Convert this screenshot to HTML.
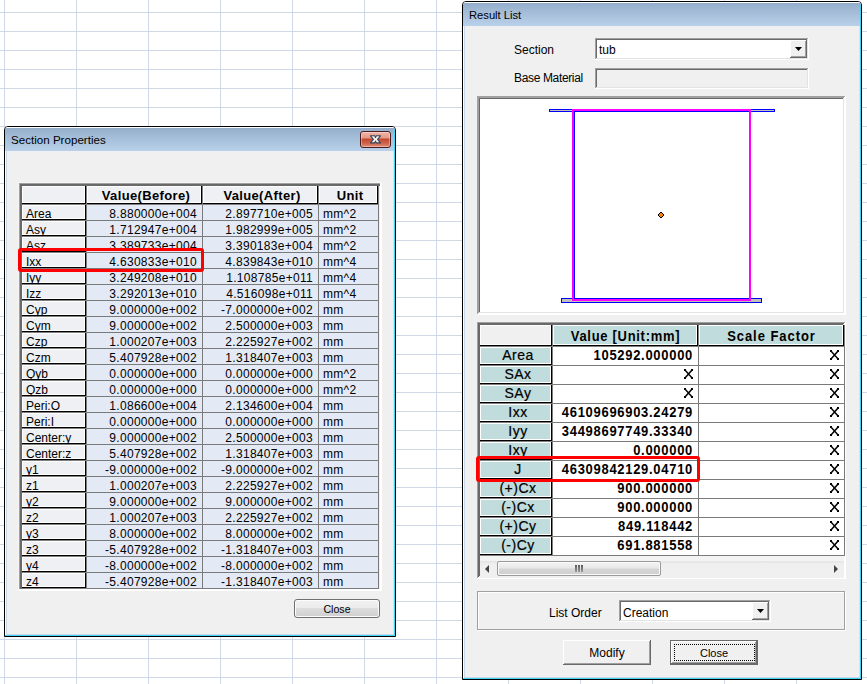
<!DOCTYPE html>
<html><head><meta charset="utf-8"><style>
html,body{margin:0;padding:0;}
body{width:867px;height:684px;overflow:hidden;position:relative;background:#fff;
font-family:"Liberation Sans",sans-serif;color:#000;}
.t{position:absolute;white-space:pre;line-height:14px;}
.abs{position:absolute;}
</style></head><body>
<div class="abs" style="left:0;top:0;width:867px;height:684px;background-image:linear-gradient(to right, transparent 4px, #d0d7e5 4px, #d0d7e5 5px, transparent 5px),linear-gradient(to bottom, transparent 12px, #d0d7e5 12px, #d0d7e5 13px, transparent 13px);background-size:72px 684px, 867px 19px;background-position:0 0, 0 0;background-repeat:repeat-x, repeat-y;"></div>
<div class="abs" style="left:4px;top:126px;width:390px;height:509px;border:1px solid #000;border-radius:4px 4px 0 0;background:#f0f0f0;box-sizing:content-box;"></div>
<div class="abs" style="left:5px;top:127px;width:390px;height:24px;border-radius:3px 3px 0 0;background:linear-gradient(to bottom,#ffffff 0px,#ffffff 1px,#93aecb 1px,#9db6d2 6px,#b9d1ea 24px);"></div>
<div style="position:absolute;left:5px;top:151px;width:1px;height:485px;background:#ffffff;"></div>
<div style="position:absolute;left:6px;top:151px;width:1px;height:483px;background:#c9d9ea;"></div>
<div style="position:absolute;left:393px;top:151px;width:1px;height:484px;background:#d6e3f0;"></div>
<div style="position:absolute;left:394px;top:130px;width:1px;height:506px;background:#3fd3f5;"></div>
<div style="position:absolute;left:6px;top:634px;width:388px;height:1px;background:#c9d9ea;"></div>
<div style="position:absolute;left:5px;top:635px;width:390px;height:1px;background:#3fd3f5;"></div>
<div class="t" style="left:11px;top:133px;text-align:left;font-size:11.6px;color:#000;">Section Properties</div>
<div class="abs" style="left:360px;top:131px;width:29px;height:15px;border:1px solid #4b1c20;border-radius:3px;
background:linear-gradient(to bottom,#f1b5a6 0px,#e49a88 6px,#c4472c 7px,#cf6a52 12px,#e0907a 15px);box-shadow:inset 0 0 0 1px rgba(255,255,255,0.35);"></div>
<svg class="abs" style="left:369px;top:134px" width="13" height="11" viewBox="0 0 13 11">
<path d="M1.5 1.8 L5.7 1.8 L6.5 3.6 L7.3 1.8 L11.5 1.8 L8.6 5.35 L11.5 8.9 L7.3 8.9 L6.5 7.1 L5.7 8.9 L1.5 8.9 L4.4 5.35 Z" fill="#f4f4f4" stroke="#3a4258" stroke-width="1.1" stroke-linejoin="round"/>
</svg>
<div style="position:absolute;left:18px;top:182px;width:364px;height:1px;background:#f5f5f5;"></div>
<div style="position:absolute;left:18px;top:182px;width:1px;height:409px;background:#f5f5f5;"></div>
<div style="position:absolute;left:19px;top:183px;width:362px;height:1px;background:#a0a0a0;"></div>
<div style="position:absolute;left:19px;top:183px;width:1px;height:407px;background:#a0a0a0;"></div>
<div style="position:absolute;left:20px;top:184px;width:360px;height:2px;background:#696969;"></div>
<div style="position:absolute;left:20px;top:184px;width:2px;height:405px;background:#696969;"></div>
<div style="position:absolute;left:380px;top:183px;width:2px;height:408px;background:#ffffff;"></div>
<div style="position:absolute;left:19px;top:589px;width:363px;height:2px;background:#ffffff;"></div>
<div style="position:absolute;left:22px;top:186px;width:358px;height:403px;background:#f0f0f0;"></div>
<div style="position:absolute;left:22px;top:186px;width:65px;height:19px;background:#808080;"></div>
<div style="position:absolute;left:22px;top:186px;width:64px;height:18px;background:#000;"></div>
<div style="position:absolute;left:22px;top:186px;width:63px;height:17px;background:#fff;"></div>
<div style="position:absolute;left:23px;top:187px;width:61px;height:15px;background:#eff0f4;"></div>
<div style="position:absolute;left:87px;top:186px;width:116px;height:19px;background:#808080;"></div>
<div style="position:absolute;left:87px;top:186px;width:115px;height:18px;background:#000;"></div>
<div style="position:absolute;left:87px;top:186px;width:114px;height:17px;background:#fff;"></div>
<div style="position:absolute;left:88px;top:187px;width:112px;height:15px;background:#eff0f4;"></div>
<div style="position:absolute;left:203px;top:186px;width:116px;height:19px;background:#808080;"></div>
<div style="position:absolute;left:203px;top:186px;width:115px;height:18px;background:#000;"></div>
<div style="position:absolute;left:203px;top:186px;width:114px;height:17px;background:#fff;"></div>
<div style="position:absolute;left:204px;top:187px;width:112px;height:15px;background:#eff0f4;"></div>
<div style="position:absolute;left:319px;top:186px;width:60px;height:19px;background:#808080;"></div>
<div style="position:absolute;left:319px;top:186px;width:59px;height:18px;background:#000;"></div>
<div style="position:absolute;left:319px;top:186px;width:58px;height:17px;background:#fff;"></div>
<div style="position:absolute;left:320px;top:187px;width:56px;height:15px;background:#eff0f4;"></div>
<div class="t" style="left:88px;top:189px;width:116px;text-align:center;font-size:13px;font-weight:bold;letter-spacing:0.35px;">Value(Before)</div>
<div class="t" style="left:204px;top:189px;width:116px;text-align:center;font-size:13px;font-weight:bold;letter-spacing:0.35px;">Value(After)</div>
<div class="t" style="left:320px;top:189px;width:60px;text-align:center;font-size:13px;font-weight:bold;letter-spacing:0.35px;">Unit</div>
<div style="position:absolute;left:22px;top:205px;width:65px;height:16px;background:#808080;"></div>
<div style="position:absolute;left:22px;top:205px;width:64px;height:15px;background:#000;"></div>
<div style="position:absolute;left:22px;top:205px;width:63px;height:14px;background:#fff;"></div>
<div style="position:absolute;left:23px;top:206px;width:61px;height:12px;background:#eff0f4;"></div>
<div style="position:absolute;left:87px;top:205px;width:116px;height:16px;background:#7a7a7a;"></div>
<div style="position:absolute;left:87px;top:205px;width:115px;height:15px;background:#e4eaf5;"></div>
<div style="position:absolute;left:203px;top:205px;width:116px;height:16px;background:#7a7a7a;"></div>
<div style="position:absolute;left:203px;top:205px;width:115px;height:15px;background:#e4eaf5;"></div>
<div style="position:absolute;left:319px;top:205px;width:60px;height:16px;background:#7a7a7a;"></div>
<div style="position:absolute;left:319px;top:205px;width:59px;height:15px;background:#e4eaf5;"></div>
<div class="abs" style="left:23px;top:206px;width:61px;height:13px;overflow:hidden;"><div class="t" style="left:3px;top:1px;font-size:12px;">Area</div></div>
<div class="t" style="left:87px;top:207px;width:110px;text-align:right;font-size:12px;letter-spacing:0.3px;">8.880000e+004</div>
<div class="t" style="left:203px;top:207px;width:110px;text-align:right;font-size:12px;letter-spacing:0.3px;">2.897710e+005</div>
<div class="t" style="left:323px;top:207px;text-align:left;font-size:12px;letter-spacing:0.3px;">mm^2</div>
<div style="position:absolute;left:22px;top:221px;width:65px;height:16px;background:#808080;"></div>
<div style="position:absolute;left:22px;top:221px;width:64px;height:15px;background:#000;"></div>
<div style="position:absolute;left:22px;top:221px;width:63px;height:14px;background:#fff;"></div>
<div style="position:absolute;left:23px;top:222px;width:61px;height:12px;background:#eff0f4;"></div>
<div style="position:absolute;left:87px;top:221px;width:116px;height:16px;background:#7a7a7a;"></div>
<div style="position:absolute;left:87px;top:221px;width:115px;height:15px;background:#e4eaf5;"></div>
<div style="position:absolute;left:203px;top:221px;width:116px;height:16px;background:#7a7a7a;"></div>
<div style="position:absolute;left:203px;top:221px;width:115px;height:15px;background:#e4eaf5;"></div>
<div style="position:absolute;left:319px;top:221px;width:60px;height:16px;background:#7a7a7a;"></div>
<div style="position:absolute;left:319px;top:221px;width:59px;height:15px;background:#e4eaf5;"></div>
<div class="abs" style="left:23px;top:222px;width:61px;height:13px;overflow:hidden;"><div class="t" style="left:3px;top:1px;font-size:12px;">Asy</div></div>
<div class="t" style="left:87px;top:223px;width:110px;text-align:right;font-size:12px;letter-spacing:0.3px;">1.712947e+004</div>
<div class="t" style="left:203px;top:223px;width:110px;text-align:right;font-size:12px;letter-spacing:0.3px;">1.982999e+005</div>
<div class="t" style="left:323px;top:223px;text-align:left;font-size:12px;letter-spacing:0.3px;">mm^2</div>
<div style="position:absolute;left:22px;top:237px;width:65px;height:16px;background:#808080;"></div>
<div style="position:absolute;left:22px;top:237px;width:64px;height:15px;background:#000;"></div>
<div style="position:absolute;left:22px;top:237px;width:63px;height:14px;background:#fff;"></div>
<div style="position:absolute;left:23px;top:238px;width:61px;height:12px;background:#eff0f4;"></div>
<div style="position:absolute;left:87px;top:237px;width:116px;height:16px;background:#7a7a7a;"></div>
<div style="position:absolute;left:87px;top:237px;width:115px;height:15px;background:#e4eaf5;"></div>
<div style="position:absolute;left:203px;top:237px;width:116px;height:16px;background:#7a7a7a;"></div>
<div style="position:absolute;left:203px;top:237px;width:115px;height:15px;background:#e4eaf5;"></div>
<div style="position:absolute;left:319px;top:237px;width:60px;height:16px;background:#7a7a7a;"></div>
<div style="position:absolute;left:319px;top:237px;width:59px;height:15px;background:#e4eaf5;"></div>
<div class="abs" style="left:23px;top:238px;width:61px;height:13px;overflow:hidden;"><div class="t" style="left:3px;top:1px;font-size:12px;">Asz</div></div>
<div class="t" style="left:87px;top:239px;width:110px;text-align:right;font-size:12px;letter-spacing:0.3px;">3.389733e+004</div>
<div class="t" style="left:203px;top:239px;width:110px;text-align:right;font-size:12px;letter-spacing:0.3px;">3.390183e+004</div>
<div class="t" style="left:323px;top:239px;text-align:left;font-size:12px;letter-spacing:0.3px;">mm^2</div>
<div style="position:absolute;left:22px;top:253px;width:65px;height:16px;background:#808080;"></div>
<div style="position:absolute;left:22px;top:253px;width:64px;height:15px;background:#000;"></div>
<div style="position:absolute;left:22px;top:253px;width:63px;height:14px;background:#fff;"></div>
<div style="position:absolute;left:23px;top:254px;width:61px;height:12px;background:#eff0f4;"></div>
<div style="position:absolute;left:87px;top:253px;width:116px;height:16px;background:#7a7a7a;"></div>
<div style="position:absolute;left:87px;top:253px;width:115px;height:15px;background:#e4eaf5;"></div>
<div style="position:absolute;left:203px;top:253px;width:116px;height:16px;background:#7a7a7a;"></div>
<div style="position:absolute;left:203px;top:253px;width:115px;height:15px;background:#e4eaf5;"></div>
<div style="position:absolute;left:319px;top:253px;width:60px;height:16px;background:#7a7a7a;"></div>
<div style="position:absolute;left:319px;top:253px;width:59px;height:15px;background:#e4eaf5;"></div>
<div class="abs" style="left:23px;top:254px;width:61px;height:13px;overflow:hidden;"><div class="t" style="left:3px;top:1px;font-size:12px;">Ixx</div></div>
<div class="t" style="left:87px;top:255px;width:110px;text-align:right;font-size:12px;letter-spacing:0.3px;">4.630833e+010</div>
<div class="t" style="left:203px;top:255px;width:110px;text-align:right;font-size:12px;letter-spacing:0.3px;">4.839843e+010</div>
<div class="t" style="left:323px;top:255px;text-align:left;font-size:12px;letter-spacing:0.3px;">mm^4</div>
<div style="position:absolute;left:22px;top:269px;width:65px;height:16px;background:#808080;"></div>
<div style="position:absolute;left:22px;top:269px;width:64px;height:15px;background:#000;"></div>
<div style="position:absolute;left:22px;top:269px;width:63px;height:14px;background:#fff;"></div>
<div style="position:absolute;left:23px;top:270px;width:61px;height:12px;background:#eff0f4;"></div>
<div style="position:absolute;left:87px;top:269px;width:116px;height:16px;background:#7a7a7a;"></div>
<div style="position:absolute;left:87px;top:269px;width:115px;height:15px;background:#e4eaf5;"></div>
<div style="position:absolute;left:203px;top:269px;width:116px;height:16px;background:#7a7a7a;"></div>
<div style="position:absolute;left:203px;top:269px;width:115px;height:15px;background:#e4eaf5;"></div>
<div style="position:absolute;left:319px;top:269px;width:60px;height:16px;background:#7a7a7a;"></div>
<div style="position:absolute;left:319px;top:269px;width:59px;height:15px;background:#e4eaf5;"></div>
<div class="abs" style="left:23px;top:270px;width:61px;height:13px;overflow:hidden;"><div class="t" style="left:3px;top:1px;font-size:12px;">Iyy</div></div>
<div class="t" style="left:87px;top:271px;width:110px;text-align:right;font-size:12px;letter-spacing:0.3px;">3.249208e+010</div>
<div class="t" style="left:203px;top:271px;width:110px;text-align:right;font-size:12px;letter-spacing:0.3px;">1.108785e+011</div>
<div class="t" style="left:323px;top:271px;text-align:left;font-size:12px;letter-spacing:0.3px;">mm^4</div>
<div style="position:absolute;left:22px;top:285px;width:65px;height:16px;background:#808080;"></div>
<div style="position:absolute;left:22px;top:285px;width:64px;height:15px;background:#000;"></div>
<div style="position:absolute;left:22px;top:285px;width:63px;height:14px;background:#fff;"></div>
<div style="position:absolute;left:23px;top:286px;width:61px;height:12px;background:#eff0f4;"></div>
<div style="position:absolute;left:87px;top:285px;width:116px;height:16px;background:#7a7a7a;"></div>
<div style="position:absolute;left:87px;top:285px;width:115px;height:15px;background:#e4eaf5;"></div>
<div style="position:absolute;left:203px;top:285px;width:116px;height:16px;background:#7a7a7a;"></div>
<div style="position:absolute;left:203px;top:285px;width:115px;height:15px;background:#e4eaf5;"></div>
<div style="position:absolute;left:319px;top:285px;width:60px;height:16px;background:#7a7a7a;"></div>
<div style="position:absolute;left:319px;top:285px;width:59px;height:15px;background:#e4eaf5;"></div>
<div class="abs" style="left:23px;top:286px;width:61px;height:13px;overflow:hidden;"><div class="t" style="left:3px;top:1px;font-size:12px;">Izz</div></div>
<div class="t" style="left:87px;top:287px;width:110px;text-align:right;font-size:12px;letter-spacing:0.3px;">3.292013e+010</div>
<div class="t" style="left:203px;top:287px;width:110px;text-align:right;font-size:12px;letter-spacing:0.3px;">4.516098e+011</div>
<div class="t" style="left:323px;top:287px;text-align:left;font-size:12px;letter-spacing:0.3px;">mm^4</div>
<div style="position:absolute;left:22px;top:301px;width:65px;height:16px;background:#808080;"></div>
<div style="position:absolute;left:22px;top:301px;width:64px;height:15px;background:#000;"></div>
<div style="position:absolute;left:22px;top:301px;width:63px;height:14px;background:#fff;"></div>
<div style="position:absolute;left:23px;top:302px;width:61px;height:12px;background:#eff0f4;"></div>
<div style="position:absolute;left:87px;top:301px;width:116px;height:16px;background:#7a7a7a;"></div>
<div style="position:absolute;left:87px;top:301px;width:115px;height:15px;background:#e4eaf5;"></div>
<div style="position:absolute;left:203px;top:301px;width:116px;height:16px;background:#7a7a7a;"></div>
<div style="position:absolute;left:203px;top:301px;width:115px;height:15px;background:#e4eaf5;"></div>
<div style="position:absolute;left:319px;top:301px;width:60px;height:16px;background:#7a7a7a;"></div>
<div style="position:absolute;left:319px;top:301px;width:59px;height:15px;background:#e4eaf5;"></div>
<div class="abs" style="left:23px;top:302px;width:61px;height:13px;overflow:hidden;"><div class="t" style="left:3px;top:1px;font-size:12px;">Cyp</div></div>
<div class="t" style="left:87px;top:303px;width:110px;text-align:right;font-size:12px;letter-spacing:0.3px;">9.000000e+002</div>
<div class="t" style="left:203px;top:303px;width:110px;text-align:right;font-size:12px;letter-spacing:0.3px;">-7.000000e+002</div>
<div class="t" style="left:323px;top:303px;text-align:left;font-size:12px;letter-spacing:0.3px;">mm</div>
<div style="position:absolute;left:22px;top:317px;width:65px;height:16px;background:#808080;"></div>
<div style="position:absolute;left:22px;top:317px;width:64px;height:15px;background:#000;"></div>
<div style="position:absolute;left:22px;top:317px;width:63px;height:14px;background:#fff;"></div>
<div style="position:absolute;left:23px;top:318px;width:61px;height:12px;background:#eff0f4;"></div>
<div style="position:absolute;left:87px;top:317px;width:116px;height:16px;background:#7a7a7a;"></div>
<div style="position:absolute;left:87px;top:317px;width:115px;height:15px;background:#e4eaf5;"></div>
<div style="position:absolute;left:203px;top:317px;width:116px;height:16px;background:#7a7a7a;"></div>
<div style="position:absolute;left:203px;top:317px;width:115px;height:15px;background:#e4eaf5;"></div>
<div style="position:absolute;left:319px;top:317px;width:60px;height:16px;background:#7a7a7a;"></div>
<div style="position:absolute;left:319px;top:317px;width:59px;height:15px;background:#e4eaf5;"></div>
<div class="abs" style="left:23px;top:318px;width:61px;height:13px;overflow:hidden;"><div class="t" style="left:3px;top:1px;font-size:12px;">Cym</div></div>
<div class="t" style="left:87px;top:319px;width:110px;text-align:right;font-size:12px;letter-spacing:0.3px;">9.000000e+002</div>
<div class="t" style="left:203px;top:319px;width:110px;text-align:right;font-size:12px;letter-spacing:0.3px;">2.500000e+003</div>
<div class="t" style="left:323px;top:319px;text-align:left;font-size:12px;letter-spacing:0.3px;">mm</div>
<div style="position:absolute;left:22px;top:333px;width:65px;height:16px;background:#808080;"></div>
<div style="position:absolute;left:22px;top:333px;width:64px;height:15px;background:#000;"></div>
<div style="position:absolute;left:22px;top:333px;width:63px;height:14px;background:#fff;"></div>
<div style="position:absolute;left:23px;top:334px;width:61px;height:12px;background:#eff0f4;"></div>
<div style="position:absolute;left:87px;top:333px;width:116px;height:16px;background:#7a7a7a;"></div>
<div style="position:absolute;left:87px;top:333px;width:115px;height:15px;background:#e4eaf5;"></div>
<div style="position:absolute;left:203px;top:333px;width:116px;height:16px;background:#7a7a7a;"></div>
<div style="position:absolute;left:203px;top:333px;width:115px;height:15px;background:#e4eaf5;"></div>
<div style="position:absolute;left:319px;top:333px;width:60px;height:16px;background:#7a7a7a;"></div>
<div style="position:absolute;left:319px;top:333px;width:59px;height:15px;background:#e4eaf5;"></div>
<div class="abs" style="left:23px;top:334px;width:61px;height:13px;overflow:hidden;"><div class="t" style="left:3px;top:1px;font-size:12px;">Czp</div></div>
<div class="t" style="left:87px;top:335px;width:110px;text-align:right;font-size:12px;letter-spacing:0.3px;">1.000207e+003</div>
<div class="t" style="left:203px;top:335px;width:110px;text-align:right;font-size:12px;letter-spacing:0.3px;">2.225927e+002</div>
<div class="t" style="left:323px;top:335px;text-align:left;font-size:12px;letter-spacing:0.3px;">mm</div>
<div style="position:absolute;left:22px;top:349px;width:65px;height:16px;background:#808080;"></div>
<div style="position:absolute;left:22px;top:349px;width:64px;height:15px;background:#000;"></div>
<div style="position:absolute;left:22px;top:349px;width:63px;height:14px;background:#fff;"></div>
<div style="position:absolute;left:23px;top:350px;width:61px;height:12px;background:#eff0f4;"></div>
<div style="position:absolute;left:87px;top:349px;width:116px;height:16px;background:#7a7a7a;"></div>
<div style="position:absolute;left:87px;top:349px;width:115px;height:15px;background:#e4eaf5;"></div>
<div style="position:absolute;left:203px;top:349px;width:116px;height:16px;background:#7a7a7a;"></div>
<div style="position:absolute;left:203px;top:349px;width:115px;height:15px;background:#e4eaf5;"></div>
<div style="position:absolute;left:319px;top:349px;width:60px;height:16px;background:#7a7a7a;"></div>
<div style="position:absolute;left:319px;top:349px;width:59px;height:15px;background:#e4eaf5;"></div>
<div class="abs" style="left:23px;top:350px;width:61px;height:13px;overflow:hidden;"><div class="t" style="left:3px;top:1px;font-size:12px;">Czm</div></div>
<div class="t" style="left:87px;top:351px;width:110px;text-align:right;font-size:12px;letter-spacing:0.3px;">5.407928e+002</div>
<div class="t" style="left:203px;top:351px;width:110px;text-align:right;font-size:12px;letter-spacing:0.3px;">1.318407e+003</div>
<div class="t" style="left:323px;top:351px;text-align:left;font-size:12px;letter-spacing:0.3px;">mm</div>
<div style="position:absolute;left:22px;top:365px;width:65px;height:16px;background:#808080;"></div>
<div style="position:absolute;left:22px;top:365px;width:64px;height:15px;background:#000;"></div>
<div style="position:absolute;left:22px;top:365px;width:63px;height:14px;background:#fff;"></div>
<div style="position:absolute;left:23px;top:366px;width:61px;height:12px;background:#eff0f4;"></div>
<div style="position:absolute;left:87px;top:365px;width:116px;height:16px;background:#7a7a7a;"></div>
<div style="position:absolute;left:87px;top:365px;width:115px;height:15px;background:#e4eaf5;"></div>
<div style="position:absolute;left:203px;top:365px;width:116px;height:16px;background:#7a7a7a;"></div>
<div style="position:absolute;left:203px;top:365px;width:115px;height:15px;background:#e4eaf5;"></div>
<div style="position:absolute;left:319px;top:365px;width:60px;height:16px;background:#7a7a7a;"></div>
<div style="position:absolute;left:319px;top:365px;width:59px;height:15px;background:#e4eaf5;"></div>
<div class="abs" style="left:23px;top:366px;width:61px;height:13px;overflow:hidden;"><div class="t" style="left:3px;top:1px;font-size:12px;">Qyb</div></div>
<div class="t" style="left:87px;top:367px;width:110px;text-align:right;font-size:12px;letter-spacing:0.3px;">0.000000e+000</div>
<div class="t" style="left:203px;top:367px;width:110px;text-align:right;font-size:12px;letter-spacing:0.3px;">0.000000e+000</div>
<div class="t" style="left:323px;top:367px;text-align:left;font-size:12px;letter-spacing:0.3px;">mm^2</div>
<div style="position:absolute;left:22px;top:381px;width:65px;height:16px;background:#808080;"></div>
<div style="position:absolute;left:22px;top:381px;width:64px;height:15px;background:#000;"></div>
<div style="position:absolute;left:22px;top:381px;width:63px;height:14px;background:#fff;"></div>
<div style="position:absolute;left:23px;top:382px;width:61px;height:12px;background:#eff0f4;"></div>
<div style="position:absolute;left:87px;top:381px;width:116px;height:16px;background:#7a7a7a;"></div>
<div style="position:absolute;left:87px;top:381px;width:115px;height:15px;background:#e4eaf5;"></div>
<div style="position:absolute;left:203px;top:381px;width:116px;height:16px;background:#7a7a7a;"></div>
<div style="position:absolute;left:203px;top:381px;width:115px;height:15px;background:#e4eaf5;"></div>
<div style="position:absolute;left:319px;top:381px;width:60px;height:16px;background:#7a7a7a;"></div>
<div style="position:absolute;left:319px;top:381px;width:59px;height:15px;background:#e4eaf5;"></div>
<div class="abs" style="left:23px;top:382px;width:61px;height:13px;overflow:hidden;"><div class="t" style="left:3px;top:1px;font-size:12px;">Qzb</div></div>
<div class="t" style="left:87px;top:383px;width:110px;text-align:right;font-size:12px;letter-spacing:0.3px;">0.000000e+000</div>
<div class="t" style="left:203px;top:383px;width:110px;text-align:right;font-size:12px;letter-spacing:0.3px;">0.000000e+000</div>
<div class="t" style="left:323px;top:383px;text-align:left;font-size:12px;letter-spacing:0.3px;">mm^2</div>
<div style="position:absolute;left:22px;top:397px;width:65px;height:16px;background:#808080;"></div>
<div style="position:absolute;left:22px;top:397px;width:64px;height:15px;background:#000;"></div>
<div style="position:absolute;left:22px;top:397px;width:63px;height:14px;background:#fff;"></div>
<div style="position:absolute;left:23px;top:398px;width:61px;height:12px;background:#eff0f4;"></div>
<div style="position:absolute;left:87px;top:397px;width:116px;height:16px;background:#7a7a7a;"></div>
<div style="position:absolute;left:87px;top:397px;width:115px;height:15px;background:#e4eaf5;"></div>
<div style="position:absolute;left:203px;top:397px;width:116px;height:16px;background:#7a7a7a;"></div>
<div style="position:absolute;left:203px;top:397px;width:115px;height:15px;background:#e4eaf5;"></div>
<div style="position:absolute;left:319px;top:397px;width:60px;height:16px;background:#7a7a7a;"></div>
<div style="position:absolute;left:319px;top:397px;width:59px;height:15px;background:#e4eaf5;"></div>
<div class="abs" style="left:23px;top:398px;width:61px;height:13px;overflow:hidden;"><div class="t" style="left:3px;top:1px;font-size:12px;">Peri:O</div></div>
<div class="t" style="left:87px;top:399px;width:110px;text-align:right;font-size:12px;letter-spacing:0.3px;">1.086600e+004</div>
<div class="t" style="left:203px;top:399px;width:110px;text-align:right;font-size:12px;letter-spacing:0.3px;">2.134600e+004</div>
<div class="t" style="left:323px;top:399px;text-align:left;font-size:12px;letter-spacing:0.3px;">mm</div>
<div style="position:absolute;left:22px;top:413px;width:65px;height:16px;background:#808080;"></div>
<div style="position:absolute;left:22px;top:413px;width:64px;height:15px;background:#000;"></div>
<div style="position:absolute;left:22px;top:413px;width:63px;height:14px;background:#fff;"></div>
<div style="position:absolute;left:23px;top:414px;width:61px;height:12px;background:#eff0f4;"></div>
<div style="position:absolute;left:87px;top:413px;width:116px;height:16px;background:#7a7a7a;"></div>
<div style="position:absolute;left:87px;top:413px;width:115px;height:15px;background:#e4eaf5;"></div>
<div style="position:absolute;left:203px;top:413px;width:116px;height:16px;background:#7a7a7a;"></div>
<div style="position:absolute;left:203px;top:413px;width:115px;height:15px;background:#e4eaf5;"></div>
<div style="position:absolute;left:319px;top:413px;width:60px;height:16px;background:#7a7a7a;"></div>
<div style="position:absolute;left:319px;top:413px;width:59px;height:15px;background:#e4eaf5;"></div>
<div class="abs" style="left:23px;top:414px;width:61px;height:13px;overflow:hidden;"><div class="t" style="left:3px;top:1px;font-size:12px;">Peri:I</div></div>
<div class="t" style="left:87px;top:415px;width:110px;text-align:right;font-size:12px;letter-spacing:0.3px;">0.000000e+000</div>
<div class="t" style="left:203px;top:415px;width:110px;text-align:right;font-size:12px;letter-spacing:0.3px;">0.000000e+000</div>
<div class="t" style="left:323px;top:415px;text-align:left;font-size:12px;letter-spacing:0.3px;">mm</div>
<div style="position:absolute;left:22px;top:429px;width:65px;height:16px;background:#808080;"></div>
<div style="position:absolute;left:22px;top:429px;width:64px;height:15px;background:#000;"></div>
<div style="position:absolute;left:22px;top:429px;width:63px;height:14px;background:#fff;"></div>
<div style="position:absolute;left:23px;top:430px;width:61px;height:12px;background:#eff0f4;"></div>
<div style="position:absolute;left:87px;top:429px;width:116px;height:16px;background:#7a7a7a;"></div>
<div style="position:absolute;left:87px;top:429px;width:115px;height:15px;background:#e4eaf5;"></div>
<div style="position:absolute;left:203px;top:429px;width:116px;height:16px;background:#7a7a7a;"></div>
<div style="position:absolute;left:203px;top:429px;width:115px;height:15px;background:#e4eaf5;"></div>
<div style="position:absolute;left:319px;top:429px;width:60px;height:16px;background:#7a7a7a;"></div>
<div style="position:absolute;left:319px;top:429px;width:59px;height:15px;background:#e4eaf5;"></div>
<div class="abs" style="left:23px;top:430px;width:61px;height:13px;overflow:hidden;"><div class="t" style="left:3px;top:1px;font-size:12px;">Center:y</div></div>
<div class="t" style="left:87px;top:431px;width:110px;text-align:right;font-size:12px;letter-spacing:0.3px;">9.000000e+002</div>
<div class="t" style="left:203px;top:431px;width:110px;text-align:right;font-size:12px;letter-spacing:0.3px;">2.500000e+003</div>
<div class="t" style="left:323px;top:431px;text-align:left;font-size:12px;letter-spacing:0.3px;">mm</div>
<div style="position:absolute;left:22px;top:445px;width:65px;height:16px;background:#808080;"></div>
<div style="position:absolute;left:22px;top:445px;width:64px;height:15px;background:#000;"></div>
<div style="position:absolute;left:22px;top:445px;width:63px;height:14px;background:#fff;"></div>
<div style="position:absolute;left:23px;top:446px;width:61px;height:12px;background:#eff0f4;"></div>
<div style="position:absolute;left:87px;top:445px;width:116px;height:16px;background:#7a7a7a;"></div>
<div style="position:absolute;left:87px;top:445px;width:115px;height:15px;background:#e4eaf5;"></div>
<div style="position:absolute;left:203px;top:445px;width:116px;height:16px;background:#7a7a7a;"></div>
<div style="position:absolute;left:203px;top:445px;width:115px;height:15px;background:#e4eaf5;"></div>
<div style="position:absolute;left:319px;top:445px;width:60px;height:16px;background:#7a7a7a;"></div>
<div style="position:absolute;left:319px;top:445px;width:59px;height:15px;background:#e4eaf5;"></div>
<div class="abs" style="left:23px;top:446px;width:61px;height:13px;overflow:hidden;"><div class="t" style="left:3px;top:1px;font-size:12px;">Center:z</div></div>
<div class="t" style="left:87px;top:447px;width:110px;text-align:right;font-size:12px;letter-spacing:0.3px;">5.407928e+002</div>
<div class="t" style="left:203px;top:447px;width:110px;text-align:right;font-size:12px;letter-spacing:0.3px;">1.318407e+003</div>
<div class="t" style="left:323px;top:447px;text-align:left;font-size:12px;letter-spacing:0.3px;">mm</div>
<div style="position:absolute;left:22px;top:461px;width:65px;height:16px;background:#808080;"></div>
<div style="position:absolute;left:22px;top:461px;width:64px;height:15px;background:#000;"></div>
<div style="position:absolute;left:22px;top:461px;width:63px;height:14px;background:#fff;"></div>
<div style="position:absolute;left:23px;top:462px;width:61px;height:12px;background:#eff0f4;"></div>
<div style="position:absolute;left:87px;top:461px;width:116px;height:16px;background:#7a7a7a;"></div>
<div style="position:absolute;left:87px;top:461px;width:115px;height:15px;background:#e4eaf5;"></div>
<div style="position:absolute;left:203px;top:461px;width:116px;height:16px;background:#7a7a7a;"></div>
<div style="position:absolute;left:203px;top:461px;width:115px;height:15px;background:#e4eaf5;"></div>
<div style="position:absolute;left:319px;top:461px;width:60px;height:16px;background:#7a7a7a;"></div>
<div style="position:absolute;left:319px;top:461px;width:59px;height:15px;background:#e4eaf5;"></div>
<div class="abs" style="left:23px;top:462px;width:61px;height:13px;overflow:hidden;"><div class="t" style="left:3px;top:1px;font-size:12px;">y1</div></div>
<div class="t" style="left:87px;top:463px;width:110px;text-align:right;font-size:12px;letter-spacing:0.3px;">-9.000000e+002</div>
<div class="t" style="left:203px;top:463px;width:110px;text-align:right;font-size:12px;letter-spacing:0.3px;">-9.000000e+002</div>
<div class="t" style="left:323px;top:463px;text-align:left;font-size:12px;letter-spacing:0.3px;">mm</div>
<div style="position:absolute;left:22px;top:477px;width:65px;height:16px;background:#808080;"></div>
<div style="position:absolute;left:22px;top:477px;width:64px;height:15px;background:#000;"></div>
<div style="position:absolute;left:22px;top:477px;width:63px;height:14px;background:#fff;"></div>
<div style="position:absolute;left:23px;top:478px;width:61px;height:12px;background:#eff0f4;"></div>
<div style="position:absolute;left:87px;top:477px;width:116px;height:16px;background:#7a7a7a;"></div>
<div style="position:absolute;left:87px;top:477px;width:115px;height:15px;background:#e4eaf5;"></div>
<div style="position:absolute;left:203px;top:477px;width:116px;height:16px;background:#7a7a7a;"></div>
<div style="position:absolute;left:203px;top:477px;width:115px;height:15px;background:#e4eaf5;"></div>
<div style="position:absolute;left:319px;top:477px;width:60px;height:16px;background:#7a7a7a;"></div>
<div style="position:absolute;left:319px;top:477px;width:59px;height:15px;background:#e4eaf5;"></div>
<div class="abs" style="left:23px;top:478px;width:61px;height:13px;overflow:hidden;"><div class="t" style="left:3px;top:1px;font-size:12px;">z1</div></div>
<div class="t" style="left:87px;top:479px;width:110px;text-align:right;font-size:12px;letter-spacing:0.3px;">1.000207e+003</div>
<div class="t" style="left:203px;top:479px;width:110px;text-align:right;font-size:12px;letter-spacing:0.3px;">2.225927e+002</div>
<div class="t" style="left:323px;top:479px;text-align:left;font-size:12px;letter-spacing:0.3px;">mm</div>
<div style="position:absolute;left:22px;top:493px;width:65px;height:16px;background:#808080;"></div>
<div style="position:absolute;left:22px;top:493px;width:64px;height:15px;background:#000;"></div>
<div style="position:absolute;left:22px;top:493px;width:63px;height:14px;background:#fff;"></div>
<div style="position:absolute;left:23px;top:494px;width:61px;height:12px;background:#eff0f4;"></div>
<div style="position:absolute;left:87px;top:493px;width:116px;height:16px;background:#7a7a7a;"></div>
<div style="position:absolute;left:87px;top:493px;width:115px;height:15px;background:#e4eaf5;"></div>
<div style="position:absolute;left:203px;top:493px;width:116px;height:16px;background:#7a7a7a;"></div>
<div style="position:absolute;left:203px;top:493px;width:115px;height:15px;background:#e4eaf5;"></div>
<div style="position:absolute;left:319px;top:493px;width:60px;height:16px;background:#7a7a7a;"></div>
<div style="position:absolute;left:319px;top:493px;width:59px;height:15px;background:#e4eaf5;"></div>
<div class="abs" style="left:23px;top:494px;width:61px;height:13px;overflow:hidden;"><div class="t" style="left:3px;top:1px;font-size:12px;">y2</div></div>
<div class="t" style="left:87px;top:495px;width:110px;text-align:right;font-size:12px;letter-spacing:0.3px;">9.000000e+002</div>
<div class="t" style="left:203px;top:495px;width:110px;text-align:right;font-size:12px;letter-spacing:0.3px;">9.000000e+002</div>
<div class="t" style="left:323px;top:495px;text-align:left;font-size:12px;letter-spacing:0.3px;">mm</div>
<div style="position:absolute;left:22px;top:509px;width:65px;height:16px;background:#808080;"></div>
<div style="position:absolute;left:22px;top:509px;width:64px;height:15px;background:#000;"></div>
<div style="position:absolute;left:22px;top:509px;width:63px;height:14px;background:#fff;"></div>
<div style="position:absolute;left:23px;top:510px;width:61px;height:12px;background:#eff0f4;"></div>
<div style="position:absolute;left:87px;top:509px;width:116px;height:16px;background:#7a7a7a;"></div>
<div style="position:absolute;left:87px;top:509px;width:115px;height:15px;background:#e4eaf5;"></div>
<div style="position:absolute;left:203px;top:509px;width:116px;height:16px;background:#7a7a7a;"></div>
<div style="position:absolute;left:203px;top:509px;width:115px;height:15px;background:#e4eaf5;"></div>
<div style="position:absolute;left:319px;top:509px;width:60px;height:16px;background:#7a7a7a;"></div>
<div style="position:absolute;left:319px;top:509px;width:59px;height:15px;background:#e4eaf5;"></div>
<div class="abs" style="left:23px;top:510px;width:61px;height:13px;overflow:hidden;"><div class="t" style="left:3px;top:1px;font-size:12px;">z2</div></div>
<div class="t" style="left:87px;top:511px;width:110px;text-align:right;font-size:12px;letter-spacing:0.3px;">1.000207e+003</div>
<div class="t" style="left:203px;top:511px;width:110px;text-align:right;font-size:12px;letter-spacing:0.3px;">2.225927e+002</div>
<div class="t" style="left:323px;top:511px;text-align:left;font-size:12px;letter-spacing:0.3px;">mm</div>
<div style="position:absolute;left:22px;top:525px;width:65px;height:16px;background:#808080;"></div>
<div style="position:absolute;left:22px;top:525px;width:64px;height:15px;background:#000;"></div>
<div style="position:absolute;left:22px;top:525px;width:63px;height:14px;background:#fff;"></div>
<div style="position:absolute;left:23px;top:526px;width:61px;height:12px;background:#eff0f4;"></div>
<div style="position:absolute;left:87px;top:525px;width:116px;height:16px;background:#7a7a7a;"></div>
<div style="position:absolute;left:87px;top:525px;width:115px;height:15px;background:#e4eaf5;"></div>
<div style="position:absolute;left:203px;top:525px;width:116px;height:16px;background:#7a7a7a;"></div>
<div style="position:absolute;left:203px;top:525px;width:115px;height:15px;background:#e4eaf5;"></div>
<div style="position:absolute;left:319px;top:525px;width:60px;height:16px;background:#7a7a7a;"></div>
<div style="position:absolute;left:319px;top:525px;width:59px;height:15px;background:#e4eaf5;"></div>
<div class="abs" style="left:23px;top:526px;width:61px;height:13px;overflow:hidden;"><div class="t" style="left:3px;top:1px;font-size:12px;">y3</div></div>
<div class="t" style="left:87px;top:527px;width:110px;text-align:right;font-size:12px;letter-spacing:0.3px;">8.000000e+002</div>
<div class="t" style="left:203px;top:527px;width:110px;text-align:right;font-size:12px;letter-spacing:0.3px;">8.000000e+002</div>
<div class="t" style="left:323px;top:527px;text-align:left;font-size:12px;letter-spacing:0.3px;">mm</div>
<div style="position:absolute;left:22px;top:541px;width:65px;height:16px;background:#808080;"></div>
<div style="position:absolute;left:22px;top:541px;width:64px;height:15px;background:#000;"></div>
<div style="position:absolute;left:22px;top:541px;width:63px;height:14px;background:#fff;"></div>
<div style="position:absolute;left:23px;top:542px;width:61px;height:12px;background:#eff0f4;"></div>
<div style="position:absolute;left:87px;top:541px;width:116px;height:16px;background:#7a7a7a;"></div>
<div style="position:absolute;left:87px;top:541px;width:115px;height:15px;background:#e4eaf5;"></div>
<div style="position:absolute;left:203px;top:541px;width:116px;height:16px;background:#7a7a7a;"></div>
<div style="position:absolute;left:203px;top:541px;width:115px;height:15px;background:#e4eaf5;"></div>
<div style="position:absolute;left:319px;top:541px;width:60px;height:16px;background:#7a7a7a;"></div>
<div style="position:absolute;left:319px;top:541px;width:59px;height:15px;background:#e4eaf5;"></div>
<div class="abs" style="left:23px;top:542px;width:61px;height:13px;overflow:hidden;"><div class="t" style="left:3px;top:1px;font-size:12px;">z3</div></div>
<div class="t" style="left:87px;top:543px;width:110px;text-align:right;font-size:12px;letter-spacing:0.3px;">-5.407928e+002</div>
<div class="t" style="left:203px;top:543px;width:110px;text-align:right;font-size:12px;letter-spacing:0.3px;">-1.318407e+003</div>
<div class="t" style="left:323px;top:543px;text-align:left;font-size:12px;letter-spacing:0.3px;">mm</div>
<div style="position:absolute;left:22px;top:557px;width:65px;height:16px;background:#808080;"></div>
<div style="position:absolute;left:22px;top:557px;width:64px;height:15px;background:#000;"></div>
<div style="position:absolute;left:22px;top:557px;width:63px;height:14px;background:#fff;"></div>
<div style="position:absolute;left:23px;top:558px;width:61px;height:12px;background:#eff0f4;"></div>
<div style="position:absolute;left:87px;top:557px;width:116px;height:16px;background:#7a7a7a;"></div>
<div style="position:absolute;left:87px;top:557px;width:115px;height:15px;background:#e4eaf5;"></div>
<div style="position:absolute;left:203px;top:557px;width:116px;height:16px;background:#7a7a7a;"></div>
<div style="position:absolute;left:203px;top:557px;width:115px;height:15px;background:#e4eaf5;"></div>
<div style="position:absolute;left:319px;top:557px;width:60px;height:16px;background:#7a7a7a;"></div>
<div style="position:absolute;left:319px;top:557px;width:59px;height:15px;background:#e4eaf5;"></div>
<div class="abs" style="left:23px;top:558px;width:61px;height:13px;overflow:hidden;"><div class="t" style="left:3px;top:1px;font-size:12px;">y4</div></div>
<div class="t" style="left:87px;top:559px;width:110px;text-align:right;font-size:12px;letter-spacing:0.3px;">-8.000000e+002</div>
<div class="t" style="left:203px;top:559px;width:110px;text-align:right;font-size:12px;letter-spacing:0.3px;">-8.000000e+002</div>
<div class="t" style="left:323px;top:559px;text-align:left;font-size:12px;letter-spacing:0.3px;">mm</div>
<div style="position:absolute;left:22px;top:573px;width:65px;height:16px;background:#808080;"></div>
<div style="position:absolute;left:22px;top:573px;width:64px;height:15px;background:#000;"></div>
<div style="position:absolute;left:22px;top:573px;width:63px;height:14px;background:#fff;"></div>
<div style="position:absolute;left:23px;top:574px;width:61px;height:12px;background:#eff0f4;"></div>
<div style="position:absolute;left:87px;top:573px;width:116px;height:16px;background:#7a7a7a;"></div>
<div style="position:absolute;left:87px;top:573px;width:115px;height:15px;background:#e4eaf5;"></div>
<div style="position:absolute;left:203px;top:573px;width:116px;height:16px;background:#7a7a7a;"></div>
<div style="position:absolute;left:203px;top:573px;width:115px;height:15px;background:#e4eaf5;"></div>
<div style="position:absolute;left:319px;top:573px;width:60px;height:16px;background:#7a7a7a;"></div>
<div style="position:absolute;left:319px;top:573px;width:59px;height:15px;background:#e4eaf5;"></div>
<div class="abs" style="left:23px;top:574px;width:61px;height:13px;overflow:hidden;"><div class="t" style="left:3px;top:1px;font-size:12px;">z4</div></div>
<div class="t" style="left:87px;top:575px;width:110px;text-align:right;font-size:12px;letter-spacing:0.3px;">-5.407928e+002</div>
<div class="t" style="left:203px;top:575px;width:110px;text-align:right;font-size:12px;letter-spacing:0.3px;">-1.318407e+003</div>
<div class="t" style="left:323px;top:575px;text-align:left;font-size:12px;letter-spacing:0.3px;">mm</div>
<div class="abs" style="left:294px;top:599px;width:84px;height:17px;border:1px solid #707070;border-radius:3px;
background:linear-gradient(to bottom,#f2f2f2 0%,#ebebeb 50%,#dddddd 50%,#cfcfcf 100%);box-shadow:inset 0 0 0 1px #fcfcfc;"></div>
<div class="t" style="left:294px;top:602px;width:86px;text-align:center;font-size:10.6px;">Close</div>
<div class="abs" style="left:462px;top:1px;width:398px;height:677px;border:1px solid #000;border-radius:4px 4px 0 0;background:#f0f0f0;box-sizing:content-box;"></div>
<div class="abs" style="left:463px;top:2px;width:398px;height:24px;border-radius:3px 3px 0 0;background:linear-gradient(to bottom,#ffffff 0px,#ffffff 1px,#93aecb 1px,#9db6d2 6px,#b9d1ea 24px);"></div>
<div style="position:absolute;left:463px;top:26px;width:1px;height:653px;background:#ffffff;"></div>
<div style="position:absolute;left:464px;top:26px;width:1px;height:651px;background:#c9d9ea;"></div>
<div style="position:absolute;left:859px;top:26px;width:1px;height:652px;background:#d6e3f0;"></div>
<div style="position:absolute;left:860px;top:5px;width:1px;height:674px;background:#3fd3f5;"></div>
<div style="position:absolute;left:464px;top:677px;width:396px;height:1px;background:#c9d9ea;"></div>
<div style="position:absolute;left:463px;top:678px;width:398px;height:1px;background:#3fd3f5;"></div>
<div class="t" style="left:469px;top:8px;text-align:left;font-size:11.2px;color:#000;">Result List</div>
<div class="t" style="left:514px;top:43px;text-align:left;font-size:12px;">Section</div>
<div class="t" style="left:514px;top:71px;text-align:left;font-size:12px;letter-spacing:-0.35px;">Base Material</div>
<div style="position:absolute;left:595px;top:38px;width:214px;height:22px;background:#ffffff;"></div>
<div style="position:absolute;left:595px;top:38px;width:213px;height:21px;background:#a0a0a0;"></div>
<div style="position:absolute;left:596px;top:39px;width:212px;height:20px;background:#e3e3e3;"></div>
<div style="position:absolute;left:596px;top:39px;width:211px;height:19px;background:#696969;"></div>
<div style="position:absolute;left:597px;top:40px;width:210px;height:18px;background:#ffffff;"></div>
<div class="t" style="left:599px;top:43px;text-align:left;font-size:12px;">tub</div>
<div style="position:absolute;left:790px;top:40px;width:17px;height:18px;background:#696969;"></div>
<div style="position:absolute;left:790px;top:40px;width:16px;height:17px;background:#ffffff;"></div>
<div style="position:absolute;left:791px;top:41px;width:15px;height:16px;background:#a0a0a0;"></div>
<div style="position:absolute;left:791px;top:41px;width:14px;height:15px;background:#f0f0f0;"></div>
<svg class="abs" style="left:795px;top:47px" width="8" height="5"><path d="M0 0H7L3.5 4Z" fill="#000"/></svg>
<div style="position:absolute;left:595px;top:68px;width:214px;height:21px;background:#ffffff;"></div>
<div style="position:absolute;left:595px;top:68px;width:213px;height:20px;background:#a0a0a0;"></div>
<div style="position:absolute;left:596px;top:69px;width:212px;height:19px;background:#e3e3e3;"></div>
<div style="position:absolute;left:596px;top:69px;width:211px;height:18px;background:#696969;"></div>
<div style="position:absolute;left:597px;top:70px;width:210px;height:17px;background:#f0f0f0;"></div>
<div style="position:absolute;left:477px;top:96px;width:369px;height:219px;background:#ffffff;"></div>
<div style="position:absolute;left:477px;top:96px;width:368px;height:218px;background:#a0a0a0;"></div>
<div style="position:absolute;left:478px;top:97px;width:367px;height:217px;background:#ffffff;"></div>
<div style="position:absolute;left:478px;top:97px;width:366px;height:216px;background:#a0a0a0;"></div>
<div style="position:absolute;left:479px;top:98px;width:365px;height:215px;background:#e3e3e3;"></div>
<div style="position:absolute;left:479px;top:98px;width:364px;height:214px;background:#696969;"></div>
<div style="position:absolute;left:480px;top:99px;width:363px;height:213px;background:#ffffff;"></div>
<svg class="abs" style="left:0;top:0" width="867" height="684" shape-rendering="crispEdges">
<rect x="549.5" y="109.5" width="225" height="2" fill="#c0c0b8" stroke="#0000ff" stroke-width="1"/>
<rect x="561.5" y="298.5" width="200" height="4" fill="#c0c0b8" stroke="#0000ff" stroke-width="1"/>
<rect x="574" y="111" width="1" height="187" fill="#0000ff"/>
<rect x="572" y="109" width="2" height="192" fill="#ff00ff"/>
<rect x="749" y="109" width="2" height="192" fill="#ff00ff"/>
<rect x="572" y="109" width="179" height="2" fill="#ff00ff"/>
<rect x="572" y="299" width="179" height="2" fill="#ff00ff"/>
</svg>
<svg class="abs" style="left:658px;top:212px" width="6" height="6" viewBox="0 0 6 6" shape-rendering="crispEdges">
<rect x="2" y="0" width="2" height="1" fill="#000"/><rect x="1" y="1" width="1" height="1" fill="#000"/><rect x="4" y="1" width="1" height="1" fill="#000"/>
<rect x="2" y="1" width="2" height="1" fill="#ff8000"/>
<rect x="0" y="2" width="1" height="2" fill="#000"/><rect x="5" y="2" width="1" height="2" fill="#000"/><rect x="1" y="2" width="4" height="2" fill="#ff8000"/>
<rect x="1" y="4" width="1" height="1" fill="#000"/><rect x="4" y="4" width="1" height="1" fill="#000"/><rect x="2" y="4" width="2" height="1" fill="#ff8000"/>
<rect x="2" y="5" width="2" height="1" fill="#000"/>
</svg>
<div style="position:absolute;left:477px;top:322px;width:369px;height:257px;background:#ffffff;"></div>
<div style="position:absolute;left:477px;top:322px;width:368px;height:256px;background:#a0a0a0;"></div>
<div style="position:absolute;left:478px;top:323px;width:367px;height:255px;background:#ffffff;"></div>
<div style="position:absolute;left:478px;top:323px;width:366px;height:254px;background:#696969;"></div>
<div style="position:absolute;left:479px;top:324px;width:365px;height:253px;background:#e3e3e3;"></div>
<div style="position:absolute;left:479px;top:324px;width:364px;height:252px;background:#696969;"></div>
<div style="position:absolute;left:480px;top:325px;width:363px;height:251px;background:#f0f0f0;"></div>
<div style="position:absolute;left:480px;top:325px;width:73px;height:22px;background:#808080;"></div>
<div style="position:absolute;left:480px;top:325px;width:72px;height:21px;background:#000;"></div>
<div style="position:absolute;left:480px;top:325px;width:71px;height:20px;background:#fff;"></div>
<div style="position:absolute;left:481px;top:326px;width:69px;height:18px;background:#f0f0f0;"></div>
<div style="position:absolute;left:553px;top:325px;width:146px;height:22px;background:#808080;"></div>
<div style="position:absolute;left:553px;top:325px;width:145px;height:21px;background:#000;"></div>
<div style="position:absolute;left:553px;top:325px;width:144px;height:20px;background:#fff;"></div>
<div style="position:absolute;left:554px;top:326px;width:142px;height:18px;background:#c1dcdc;"></div>
<div style="position:absolute;left:699px;top:325px;width:146px;height:22px;background:#808080;"></div>
<div style="position:absolute;left:699px;top:325px;width:145px;height:21px;background:#000;"></div>
<div style="position:absolute;left:699px;top:325px;width:144px;height:20px;background:#fff;"></div>
<div style="position:absolute;left:700px;top:326px;width:142px;height:18px;background:#c1dcdc;"></div>
<div class="t" style="left:553px;top:329px;width:145px;text-align:center;font-size:13px;font-weight:bold;letter-spacing:0.7px;transform:scaleY(1.1);transform-origin:0 0;">Value [Unit:mm]</div>
<div class="t" style="left:699px;top:329px;width:145px;text-align:center;font-size:13px;font-weight:bold;letter-spacing:0.7px;transform:scaleY(1.1);transform-origin:0 0;letter-spacing:0.95px;">Scale Factor</div>
<div style="position:absolute;left:480px;top:347px;width:73px;height:19px;background:#808080;"></div>
<div style="position:absolute;left:480px;top:347px;width:72px;height:18px;background:#000;"></div>
<div style="position:absolute;left:480px;top:347px;width:71px;height:17px;background:#fff;"></div>
<div style="position:absolute;left:481px;top:348px;width:69px;height:15px;background:#c1dcdc;"></div>
<div style="position:absolute;left:553px;top:347px;width:146px;height:19px;background:#7a7a7a;"></div>
<div style="position:absolute;left:553px;top:347px;width:145px;height:18px;background:#ffffff;"></div>
<div style="position:absolute;left:699px;top:347px;width:146px;height:19px;background:#7a7a7a;"></div>
<div style="position:absolute;left:699px;top:347px;width:145px;height:18px;background:#ffffff;"></div>
<div class="t" style="left:481px;top:348px;width:72px;text-align:center;font-size:14px;letter-spacing:0.5px;-webkit-text-stroke:0.2px #000;padding-left:1px;">Area</div>
<div class="t" style="left:553px;top:348px;width:140px;text-align:right;font-size:13px;font-weight:bold;letter-spacing:0.7px;transform:scaleY(1.1);transform-origin:0 0;">105292.000000</div>
<svg class="abs" style="left:830px;top:350px" width="9" height="10" viewBox="0 0 9 10"><path d="M0.9 0.9 L8.1 9.1 M8.1 0.9 L0.9 9.1" stroke="#000" stroke-width="1.5" stroke-linecap="square"/><path d="M0 0h2v2h-2zM7 0h2v2h-2zM0 8h2v2h-2zM7 8h2v2h-2z" fill="#000"/></svg>
<div style="position:absolute;left:480px;top:366px;width:73px;height:19px;background:#808080;"></div>
<div style="position:absolute;left:480px;top:366px;width:72px;height:18px;background:#000;"></div>
<div style="position:absolute;left:480px;top:366px;width:71px;height:17px;background:#fff;"></div>
<div style="position:absolute;left:481px;top:367px;width:69px;height:15px;background:#c1dcdc;"></div>
<div style="position:absolute;left:553px;top:366px;width:146px;height:19px;background:#7a7a7a;"></div>
<div style="position:absolute;left:553px;top:366px;width:145px;height:18px;background:#ffffff;"></div>
<div style="position:absolute;left:699px;top:366px;width:146px;height:19px;background:#7a7a7a;"></div>
<div style="position:absolute;left:699px;top:366px;width:145px;height:18px;background:#ffffff;"></div>
<div class="t" style="left:481px;top:367px;width:72px;text-align:center;font-size:14px;letter-spacing:0.5px;-webkit-text-stroke:0.2px #000;padding-left:1px;">SAx</div>
<svg class="abs" style="left:684px;top:369px" width="9" height="10" viewBox="0 0 9 10"><path d="M0.9 0.9 L8.1 9.1 M8.1 0.9 L0.9 9.1" stroke="#000" stroke-width="1.5" stroke-linecap="square"/><path d="M0 0h2v2h-2zM7 0h2v2h-2zM0 8h2v2h-2zM7 8h2v2h-2z" fill="#000"/></svg>
<svg class="abs" style="left:830px;top:369px" width="9" height="10" viewBox="0 0 9 10"><path d="M0.9 0.9 L8.1 9.1 M8.1 0.9 L0.9 9.1" stroke="#000" stroke-width="1.5" stroke-linecap="square"/><path d="M0 0h2v2h-2zM7 0h2v2h-2zM0 8h2v2h-2zM7 8h2v2h-2z" fill="#000"/></svg>
<div style="position:absolute;left:480px;top:385px;width:73px;height:19px;background:#808080;"></div>
<div style="position:absolute;left:480px;top:385px;width:72px;height:18px;background:#000;"></div>
<div style="position:absolute;left:480px;top:385px;width:71px;height:17px;background:#fff;"></div>
<div style="position:absolute;left:481px;top:386px;width:69px;height:15px;background:#c1dcdc;"></div>
<div style="position:absolute;left:553px;top:385px;width:146px;height:19px;background:#7a7a7a;"></div>
<div style="position:absolute;left:553px;top:385px;width:145px;height:18px;background:#ffffff;"></div>
<div style="position:absolute;left:699px;top:385px;width:146px;height:19px;background:#7a7a7a;"></div>
<div style="position:absolute;left:699px;top:385px;width:145px;height:18px;background:#ffffff;"></div>
<div class="t" style="left:481px;top:386px;width:72px;text-align:center;font-size:14px;letter-spacing:0.5px;-webkit-text-stroke:0.2px #000;padding-left:1px;">SAy</div>
<svg class="abs" style="left:684px;top:388px" width="9" height="10" viewBox="0 0 9 10"><path d="M0.9 0.9 L8.1 9.1 M8.1 0.9 L0.9 9.1" stroke="#000" stroke-width="1.5" stroke-linecap="square"/><path d="M0 0h2v2h-2zM7 0h2v2h-2zM0 8h2v2h-2zM7 8h2v2h-2z" fill="#000"/></svg>
<svg class="abs" style="left:830px;top:388px" width="9" height="10" viewBox="0 0 9 10"><path d="M0.9 0.9 L8.1 9.1 M8.1 0.9 L0.9 9.1" stroke="#000" stroke-width="1.5" stroke-linecap="square"/><path d="M0 0h2v2h-2zM7 0h2v2h-2zM0 8h2v2h-2zM7 8h2v2h-2z" fill="#000"/></svg>
<div style="position:absolute;left:480px;top:404px;width:73px;height:19px;background:#808080;"></div>
<div style="position:absolute;left:480px;top:404px;width:72px;height:18px;background:#000;"></div>
<div style="position:absolute;left:480px;top:404px;width:71px;height:17px;background:#fff;"></div>
<div style="position:absolute;left:481px;top:405px;width:69px;height:15px;background:#c1dcdc;"></div>
<div style="position:absolute;left:553px;top:404px;width:146px;height:19px;background:#7a7a7a;"></div>
<div style="position:absolute;left:553px;top:404px;width:145px;height:18px;background:#ffffff;"></div>
<div style="position:absolute;left:699px;top:404px;width:146px;height:19px;background:#7a7a7a;"></div>
<div style="position:absolute;left:699px;top:404px;width:145px;height:18px;background:#ffffff;"></div>
<div class="t" style="left:481px;top:405px;width:72px;text-align:center;font-size:14px;letter-spacing:0.5px;-webkit-text-stroke:0.2px #000;padding-left:1px;">Ixx</div>
<div class="t" style="left:553px;top:405px;width:140px;text-align:right;font-size:13px;font-weight:bold;letter-spacing:0.7px;transform:scaleY(1.1);transform-origin:0 0;">46109696903.24279</div>
<svg class="abs" style="left:830px;top:407px" width="9" height="10" viewBox="0 0 9 10"><path d="M0.9 0.9 L8.1 9.1 M8.1 0.9 L0.9 9.1" stroke="#000" stroke-width="1.5" stroke-linecap="square"/><path d="M0 0h2v2h-2zM7 0h2v2h-2zM0 8h2v2h-2zM7 8h2v2h-2z" fill="#000"/></svg>
<div style="position:absolute;left:480px;top:423px;width:73px;height:19px;background:#808080;"></div>
<div style="position:absolute;left:480px;top:423px;width:72px;height:18px;background:#000;"></div>
<div style="position:absolute;left:480px;top:423px;width:71px;height:17px;background:#fff;"></div>
<div style="position:absolute;left:481px;top:424px;width:69px;height:15px;background:#c1dcdc;"></div>
<div style="position:absolute;left:553px;top:423px;width:146px;height:19px;background:#7a7a7a;"></div>
<div style="position:absolute;left:553px;top:423px;width:145px;height:18px;background:#ffffff;"></div>
<div style="position:absolute;left:699px;top:423px;width:146px;height:19px;background:#7a7a7a;"></div>
<div style="position:absolute;left:699px;top:423px;width:145px;height:18px;background:#ffffff;"></div>
<div class="t" style="left:481px;top:424px;width:72px;text-align:center;font-size:14px;letter-spacing:0.5px;-webkit-text-stroke:0.2px #000;padding-left:1px;">Iyy</div>
<div class="t" style="left:553px;top:424px;width:140px;text-align:right;font-size:13px;font-weight:bold;letter-spacing:0.7px;transform:scaleY(1.1);transform-origin:0 0;">34498697749.33340</div>
<svg class="abs" style="left:830px;top:426px" width="9" height="10" viewBox="0 0 9 10"><path d="M0.9 0.9 L8.1 9.1 M8.1 0.9 L0.9 9.1" stroke="#000" stroke-width="1.5" stroke-linecap="square"/><path d="M0 0h2v2h-2zM7 0h2v2h-2zM0 8h2v2h-2zM7 8h2v2h-2z" fill="#000"/></svg>
<div style="position:absolute;left:480px;top:442px;width:73px;height:19px;background:#808080;"></div>
<div style="position:absolute;left:480px;top:442px;width:72px;height:18px;background:#000;"></div>
<div style="position:absolute;left:480px;top:442px;width:71px;height:17px;background:#fff;"></div>
<div style="position:absolute;left:481px;top:443px;width:69px;height:15px;background:#c1dcdc;"></div>
<div style="position:absolute;left:553px;top:442px;width:146px;height:19px;background:#7a7a7a;"></div>
<div style="position:absolute;left:553px;top:442px;width:145px;height:18px;background:#ffffff;"></div>
<div style="position:absolute;left:699px;top:442px;width:146px;height:19px;background:#7a7a7a;"></div>
<div style="position:absolute;left:699px;top:442px;width:145px;height:18px;background:#ffffff;"></div>
<div class="t" style="left:481px;top:443px;width:72px;text-align:center;font-size:14px;letter-spacing:0.5px;-webkit-text-stroke:0.2px #000;padding-left:1px;">Ixy</div>
<div class="t" style="left:553px;top:443px;width:140px;text-align:right;font-size:13px;font-weight:bold;letter-spacing:0.7px;transform:scaleY(1.1);transform-origin:0 0;">0.000000</div>
<svg class="abs" style="left:830px;top:445px" width="9" height="10" viewBox="0 0 9 10"><path d="M0.9 0.9 L8.1 9.1 M8.1 0.9 L0.9 9.1" stroke="#000" stroke-width="1.5" stroke-linecap="square"/><path d="M0 0h2v2h-2zM7 0h2v2h-2zM0 8h2v2h-2zM7 8h2v2h-2z" fill="#000"/></svg>
<div style="position:absolute;left:480px;top:461px;width:73px;height:19px;background:#808080;"></div>
<div style="position:absolute;left:480px;top:461px;width:72px;height:18px;background:#000;"></div>
<div style="position:absolute;left:480px;top:461px;width:71px;height:17px;background:#fff;"></div>
<div style="position:absolute;left:481px;top:462px;width:69px;height:15px;background:#c1dcdc;"></div>
<div style="position:absolute;left:553px;top:461px;width:146px;height:19px;background:#7a7a7a;"></div>
<div style="position:absolute;left:553px;top:461px;width:145px;height:18px;background:#ffffff;"></div>
<div style="position:absolute;left:699px;top:461px;width:146px;height:19px;background:#7a7a7a;"></div>
<div style="position:absolute;left:699px;top:461px;width:145px;height:18px;background:#ffffff;"></div>
<div class="t" style="left:481px;top:462px;width:72px;text-align:center;font-size:14px;letter-spacing:0.5px;-webkit-text-stroke:0.2px #000;padding-left:1px;">J</div>
<div class="t" style="left:553px;top:462px;width:140px;text-align:right;font-size:13px;font-weight:bold;letter-spacing:0.7px;transform:scaleY(1.1);transform-origin:0 0;">46309842129.04710</div>
<svg class="abs" style="left:830px;top:464px" width="9" height="10" viewBox="0 0 9 10"><path d="M0.9 0.9 L8.1 9.1 M8.1 0.9 L0.9 9.1" stroke="#000" stroke-width="1.5" stroke-linecap="square"/><path d="M0 0h2v2h-2zM7 0h2v2h-2zM0 8h2v2h-2zM7 8h2v2h-2z" fill="#000"/></svg>
<div style="position:absolute;left:480px;top:480px;width:73px;height:19px;background:#808080;"></div>
<div style="position:absolute;left:480px;top:480px;width:72px;height:18px;background:#000;"></div>
<div style="position:absolute;left:480px;top:480px;width:71px;height:17px;background:#fff;"></div>
<div style="position:absolute;left:481px;top:481px;width:69px;height:15px;background:#c1dcdc;"></div>
<div style="position:absolute;left:553px;top:480px;width:146px;height:19px;background:#7a7a7a;"></div>
<div style="position:absolute;left:553px;top:480px;width:145px;height:18px;background:#ffffff;"></div>
<div style="position:absolute;left:699px;top:480px;width:146px;height:19px;background:#7a7a7a;"></div>
<div style="position:absolute;left:699px;top:480px;width:145px;height:18px;background:#ffffff;"></div>
<div class="t" style="left:481px;top:481px;width:72px;text-align:center;font-size:14px;letter-spacing:0.5px;-webkit-text-stroke:0.2px #000;padding-left:1px;">(+)Cx</div>
<div class="t" style="left:553px;top:481px;width:140px;text-align:right;font-size:13px;font-weight:bold;letter-spacing:0.7px;transform:scaleY(1.1);transform-origin:0 0;">900.000000</div>
<svg class="abs" style="left:830px;top:483px" width="9" height="10" viewBox="0 0 9 10"><path d="M0.9 0.9 L8.1 9.1 M8.1 0.9 L0.9 9.1" stroke="#000" stroke-width="1.5" stroke-linecap="square"/><path d="M0 0h2v2h-2zM7 0h2v2h-2zM0 8h2v2h-2zM7 8h2v2h-2z" fill="#000"/></svg>
<div style="position:absolute;left:480px;top:499px;width:73px;height:19px;background:#808080;"></div>
<div style="position:absolute;left:480px;top:499px;width:72px;height:18px;background:#000;"></div>
<div style="position:absolute;left:480px;top:499px;width:71px;height:17px;background:#fff;"></div>
<div style="position:absolute;left:481px;top:500px;width:69px;height:15px;background:#c1dcdc;"></div>
<div style="position:absolute;left:553px;top:499px;width:146px;height:19px;background:#7a7a7a;"></div>
<div style="position:absolute;left:553px;top:499px;width:145px;height:18px;background:#ffffff;"></div>
<div style="position:absolute;left:699px;top:499px;width:146px;height:19px;background:#7a7a7a;"></div>
<div style="position:absolute;left:699px;top:499px;width:145px;height:18px;background:#ffffff;"></div>
<div class="t" style="left:481px;top:500px;width:72px;text-align:center;font-size:14px;letter-spacing:0.5px;-webkit-text-stroke:0.2px #000;padding-left:1px;">(-)Cx</div>
<div class="t" style="left:553px;top:500px;width:140px;text-align:right;font-size:13px;font-weight:bold;letter-spacing:0.7px;transform:scaleY(1.1);transform-origin:0 0;">900.000000</div>
<svg class="abs" style="left:830px;top:502px" width="9" height="10" viewBox="0 0 9 10"><path d="M0.9 0.9 L8.1 9.1 M8.1 0.9 L0.9 9.1" stroke="#000" stroke-width="1.5" stroke-linecap="square"/><path d="M0 0h2v2h-2zM7 0h2v2h-2zM0 8h2v2h-2zM7 8h2v2h-2z" fill="#000"/></svg>
<div style="position:absolute;left:480px;top:518px;width:73px;height:19px;background:#808080;"></div>
<div style="position:absolute;left:480px;top:518px;width:72px;height:18px;background:#000;"></div>
<div style="position:absolute;left:480px;top:518px;width:71px;height:17px;background:#fff;"></div>
<div style="position:absolute;left:481px;top:519px;width:69px;height:15px;background:#c1dcdc;"></div>
<div style="position:absolute;left:553px;top:518px;width:146px;height:19px;background:#7a7a7a;"></div>
<div style="position:absolute;left:553px;top:518px;width:145px;height:18px;background:#ffffff;"></div>
<div style="position:absolute;left:699px;top:518px;width:146px;height:19px;background:#7a7a7a;"></div>
<div style="position:absolute;left:699px;top:518px;width:145px;height:18px;background:#ffffff;"></div>
<div class="t" style="left:481px;top:519px;width:72px;text-align:center;font-size:14px;letter-spacing:0.5px;-webkit-text-stroke:0.2px #000;padding-left:1px;">(+)Cy</div>
<div class="t" style="left:553px;top:519px;width:140px;text-align:right;font-size:13px;font-weight:bold;letter-spacing:0.7px;transform:scaleY(1.1);transform-origin:0 0;">849.118442</div>
<svg class="abs" style="left:830px;top:521px" width="9" height="10" viewBox="0 0 9 10"><path d="M0.9 0.9 L8.1 9.1 M8.1 0.9 L0.9 9.1" stroke="#000" stroke-width="1.5" stroke-linecap="square"/><path d="M0 0h2v2h-2zM7 0h2v2h-2zM0 8h2v2h-2zM7 8h2v2h-2z" fill="#000"/></svg>
<div style="position:absolute;left:480px;top:537px;width:73px;height:19px;background:#808080;"></div>
<div style="position:absolute;left:480px;top:537px;width:72px;height:18px;background:#000;"></div>
<div style="position:absolute;left:480px;top:537px;width:71px;height:17px;background:#fff;"></div>
<div style="position:absolute;left:481px;top:538px;width:69px;height:15px;background:#c1dcdc;"></div>
<div style="position:absolute;left:553px;top:537px;width:146px;height:19px;background:#7a7a7a;"></div>
<div style="position:absolute;left:553px;top:537px;width:145px;height:18px;background:#ffffff;"></div>
<div style="position:absolute;left:699px;top:537px;width:146px;height:19px;background:#7a7a7a;"></div>
<div style="position:absolute;left:699px;top:537px;width:145px;height:18px;background:#ffffff;"></div>
<div class="t" style="left:481px;top:538px;width:72px;text-align:center;font-size:14px;letter-spacing:0.5px;-webkit-text-stroke:0.2px #000;padding-left:1px;">(-)Cy</div>
<div class="t" style="left:553px;top:538px;width:140px;text-align:right;font-size:13px;font-weight:bold;letter-spacing:0.7px;transform:scaleY(1.1);transform-origin:0 0;">691.881558</div>
<svg class="abs" style="left:830px;top:540px" width="9" height="10" viewBox="0 0 9 10"><path d="M0.9 0.9 L8.1 9.1 M8.1 0.9 L0.9 9.1" stroke="#000" stroke-width="1.5" stroke-linecap="square"/><path d="M0 0h2v2h-2zM7 0h2v2h-2zM0 8h2v2h-2zM7 8h2v2h-2z" fill="#000"/></svg>
<div style="position:absolute;left:480px;top:556px;width:364px;height:5px;background:#f3f3f3;"></div>
<div style="position:absolute;left:480px;top:561px;width:364px;height:17px;background:linear-gradient(to bottom,#e3e3e3,#efefef 3px,#f0f0f0);"></div>
<svg class="abs" style="left:484px;top:564px" width="6" height="10"><path d="M5 1V9L1 5Z" fill="#444"/></svg>
<svg class="abs" style="left:833px;top:564px" width="6" height="10"><path d="M1 1V9L5 5Z" fill="#444"/></svg>
<div class="abs" style="left:497px;top:561px;width:162px;height:13px;border:1px solid #9a9a9a;border-radius:2px;
background:linear-gradient(to bottom,#f4f4f4 0%,#e8e8e8 45%,#d6d6d6 55%,#cfcfcf 100%);box-shadow:inset 0 0 0 1px #fafafa;"></div>
<svg class="abs" style="left:574px;top:565px" width="10" height="7"><defs><linearGradient id="gg" x1="0" y1="0" x2="0" y2="1"><stop offset="0" stop-color="#222"/><stop offset="1" stop-color="#8a8a8a"/></linearGradient></defs><path d="M2 0V7M5 0V7M8 0V7" stroke="url(#gg)" stroke-width="1.5"/></svg>
<div style="position:absolute;left:478px;top:592px;width:366px;height:37px;border:1px solid #ffffff;box-sizing:content-box;"></div>
<div style="position:absolute;left:477px;top:591px;width:366px;height:37px;border:1px solid #a0a0a0;box-sizing:content-box;"></div>
<div class="t" style="left:549px;top:606px;text-align:left;font-size:12px;">List Order</div>
<div style="position:absolute;left:619px;top:600px;width:152px;height:22px;background:#ffffff;"></div>
<div style="position:absolute;left:619px;top:600px;width:151px;height:21px;background:#a0a0a0;"></div>
<div style="position:absolute;left:620px;top:601px;width:150px;height:20px;background:#e3e3e3;"></div>
<div style="position:absolute;left:620px;top:601px;width:149px;height:19px;background:#696969;"></div>
<div style="position:absolute;left:621px;top:602px;width:148px;height:18px;background:#ffffff;"></div>
<div class="t" style="left:623px;top:606px;text-align:left;font-size:12px;">Creation</div>
<div style="position:absolute;left:752px;top:602px;width:17px;height:18px;background:#696969;"></div>
<div style="position:absolute;left:752px;top:602px;width:16px;height:17px;background:#ffffff;"></div>
<div style="position:absolute;left:753px;top:603px;width:15px;height:16px;background:#a0a0a0;"></div>
<div style="position:absolute;left:753px;top:603px;width:14px;height:15px;background:#f0f0f0;"></div>
<svg class="abs" style="left:757px;top:609px" width="8" height="5"><path d="M0 0H7L3.5 4Z" fill="#000"/></svg>
<div style="position:absolute;left:563px;top:640px;width:88px;height:25px;background:#696969;"></div>
<div style="position:absolute;left:563px;top:640px;width:87px;height:24px;background:#ffffff;"></div>
<div style="position:absolute;left:564px;top:641px;width:86px;height:23px;background:#a0a0a0;"></div>
<div style="position:absolute;left:564px;top:641px;width:85px;height:22px;background:#f0f0f0;"></div>
<div class="t" style="left:563px;top:646px;width:88px;text-align:center;font-size:12px;">Modify</div>
<div style="position:absolute;left:670px;top:640px;width:88px;height:25px;background:#696969;"></div>
<div style="position:absolute;left:671px;top:641px;width:86px;height:23px;background:#696969;"></div>
<div style="position:absolute;left:671px;top:641px;width:85px;height:22px;background:#ffffff;"></div>
<div style="position:absolute;left:672px;top:642px;width:84px;height:21px;background:#a0a0a0;"></div>
<div style="position:absolute;left:672px;top:642px;width:83px;height:20px;background:#f0f0f0;"></div>
<div class="abs" style="left:674px;top:644px;width:79px;height:15px;border:1px dotted #000;"></div>
<div class="t" style="left:670px;top:646px;width:88px;text-align:center;font-size:11px;">Close</div>
<div class="abs" style="left:18px;top:248px;width:180px;height:18px;border:3px solid #ff0000;border-radius:3px;"></div>
<div class="abs" style="left:476px;top:456px;width:218px;height:20px;border:3px solid #ff0000;border-radius:3px;"></div>
</body></html>
